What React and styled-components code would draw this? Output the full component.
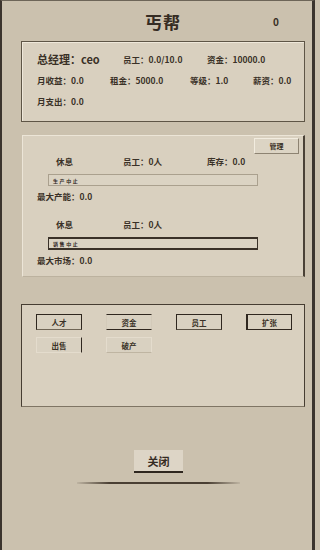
import React from "react";
import styled, { createGlobalStyle } from "styled-components";

const GlobalStyle = createGlobalStyle`
  html, body {
    margin: 0;
    padding: 0;
    background: #cbc1ae;
  }
  body {
    font-family: "Noto Sans CJK SC", "Noto Sans", sans-serif;
    color: #3a3127;
  }
  * {
    box-sizing: border-box;
  }
`;

const Frame = styled.div`
  width: 315px;
  height: 550px;
  background: #cbc1ae;
  border-left: 2px solid #3b342d;
  border-right: 3px solid #3b342d;
  border-top: 1px solid #6d6558;
  padding: 0 7px 0 19px;
  overflow: hidden;
`;

const Header = styled.div`
  height: 40px;
  display: grid;
  grid-template-columns: 1fr auto 1fr;
  align-items: center;
`;

const Title = styled.div`
  grid-column: 2;
  font-size: 17px;
  font-weight: 700;
  letter-spacing: 1px;
  color: #352c23;
`;

const Score = styled.div`
  justify-self: end;
  padding-right: 26px;
  font-size: 10px;
  font-weight: 700;
`;

const InfoPanel = styled.section`
  height: 81px;
  background: #d9d0bf;
  border: 1px solid #5e5546;
  box-shadow: inset 1px 1px 0 #efe8da;
  padding: 6px 0 0 15px;
`;

const StatRow = styled.div`
  display: flex;
  align-items: center;
  height: 21px;
`;

const Stat = styled.div`
  flex: 0 0 ${(p) => (p.$w ? `${p.$w}px` : "auto")};
  font-size: ${(p) => (p.$big ? "11px" : "8.5px")};
  font-weight: 700;
  white-space: nowrap;
`;

const WorkPanel = styled.section`
  margin-top: 13px;
  margin-left: 1px;
  background: #d9d0bf;
  border-top: 1px solid #ece5d7;
  border-left: 1px solid #ece5d7;
  border-right: 2px solid #4a4136;
  border-bottom: 1px solid #bcb29f;
  padding: 2px 4px 9px 14px;
`;

const ManageRow = styled.div`
  display: flex;
  justify-content: flex-end;
`;

const ManageButton = styled.button`
  width: 45px;
  height: 16px;
  padding: 0;
  background: #dcd4c4;
  border-top: 1px solid #f2ecdf;
  border-left: 1px solid #f2ecdf;
  border-right: 1px solid #8d8372;
  border-bottom: 1px solid #8d8372;
  font-family: inherit;
  font-size: 7px;
  font-weight: 700;
  color: #3a3127;
`;

const InfoRow = styled.div`
  display: flex;
  align-items: center;
  height: 14px;
  margin-top: ${(p) => p.$top || 0}px;
  padding-left: 19px;
`;

const Bar = styled.div`
  width: 210px;
  height: ${(p) => (p.$strong ? 13 : 12)}px;
  margin: 6px 0 0 11px;
  display: flex;
  align-items: center;
  padding-left: 4px;
  background: #dbd3c3;
  border: ${(p) => (p.$strong ? "1px solid #3a3128" : "1px solid #aaa08e")};
  border-top-width: ${(p) => (p.$strong ? 2 : 1)}px;
  border-bottom-width: ${(p) => (p.$strong ? 2 : 1)}px;
  font-size: 5px;
  font-weight: 700;
  letter-spacing: 1.6px;
  color: #2e261e;
`;

const CapRow = styled.div`
  height: 14px;
  margin-top: 3px;
  display: flex;
  align-items: center;
  font-size: 8.5px;
  font-weight: 700;
`;

const ActionPanel = styled.section`
  margin-top: 27px;
  height: 103px;
  background: #d9d0bf;
  border: 1px solid #463d32;
  border-bottom-color: #7f7564;
  padding: 9px 0 0 14px;
  display: grid;
  grid-template-columns: repeat(4, 46px);
  grid-auto-rows: 16px;
  column-gap: 24px;
  row-gap: 7px;
  align-content: start;
`;

const edgeLooks = {
  box: ["#2f271f", "#2f271f", "#6f6555", "#2f271f"],
  rails: ["#2f271f", "#d3cab9", "#2f271f", "#d3cab9"],
  hard: ["#2f271f", "#2f271f", "#5a5144", "#2f271f"],
  heavy: ["#2f271f", "#2f271f", "#2f271f", "#2f271f"],
  side: ["#e4dccd", "#2f271f", "#e4dccd", "#e4dccd"],
  flat: ["#e4dccd", "#e4dccd", "#bfb5a2", "#e4dccd"],
};

const ActionButton = styled.button`
  padding: 0;
  background: #d9d1c1;
  border-style: solid;
  border-width: 1px;
  border-left-width: ${(p) => (p.$look === "heavy" ? 2 : 1)}px;
  border-color: ${(p) => edgeLooks[p.$look].join(" ")};
  font-family: inherit;
  font-size: 7.5px;
  font-weight: 700;
  color: #3a3127;
`;

const Footer = styled.div`
  margin: 43px -7px 0 -19px;
  display: flex;
  flex-direction: column;
  align-items: center;
  padding-left: 3px;
`;

const CloseButton = styled.button`
  width: 49px;
  height: 23px;
  padding: 0;
  background: #ddd5c6;
  border: none;
  border-bottom: 2px solid #2f271f;
  font-family: inherit;
  font-size: 11px;
  font-weight: 700;
  color: #352c23;
`;

const Rule = styled.div`
  width: 163px;
  height: 2px;
  margin-top: 9px;
  background: linear-gradient(
    to right,
    rgba(74, 63, 51, 0.1),
    #4a3f33 20%,
    #4a3f33 80%,
    rgba(74, 63, 51, 0.1)
  );
`;

const info = [
  [
    { text: "总经理：ceo", w: 86, big: true },
    { text: "员工：0.0/10.0", w: 84 },
    { text: "资金：10000.0" },
  ],
  [
    { text: "月收益：0.0", w: 73 },
    { text: "租金：5000.0", w: 80 },
    { text: "等级：1.0", w: 63 },
    { text: "薪资：0.0" },
  ],
  [{ text: "月支出：0.0" }],
];

const actions = [
  { label: "人才", look: "box" },
  { label: "资金", look: "rails" },
  { label: "员工", look: "hard" },
  { label: "扩张", look: "heavy" },
  { label: "出售", look: "side" },
  { label: "破产", look: "flat" },
];

export default function App() {
  return (
    <>
      <GlobalStyle />
      <Frame>
        <Header>
          <Title>丐帮</Title>
          <Score>0</Score>
        </Header>

        <InfoPanel>
          {info.map((row, i) => (
            <StatRow key={i}>
              {row.map((s) => (
                <Stat key={s.text} $w={s.w} $big={s.big}>
                  {s.text}
                </Stat>
              ))}
            </StatRow>
          ))}
        </InfoPanel>

        <WorkPanel>
          <ManageRow>
            <ManageButton>管理</ManageButton>
          </ManageRow>
          <InfoRow>
            <Stat $w={67}>休息</Stat>
            <Stat $w={84}>员工：0人</Stat>
            <Stat>库存：0.0</Stat>
          </InfoRow>
          <Bar>生产中止</Bar>
          <CapRow>最大产能：0.0</CapRow>

          <InfoRow $top={14}>
            <Stat $w={67}>休息</Stat>
            <Stat>员工：0人</Stat>
          </InfoRow>
          <Bar $strong>销售中止</Bar>
          <CapRow>最大市场：0.0</CapRow>
        </WorkPanel>

        <ActionPanel>
          {actions.map((a) => (
            <ActionButton key={a.label} $look={a.look}>
              {a.label}
            </ActionButton>
          ))}
        </ActionPanel>

        <Footer>
          <CloseButton>关闭</CloseButton>
          <Rule />
        </Footer>
      </Frame>
    </>
  );
}
